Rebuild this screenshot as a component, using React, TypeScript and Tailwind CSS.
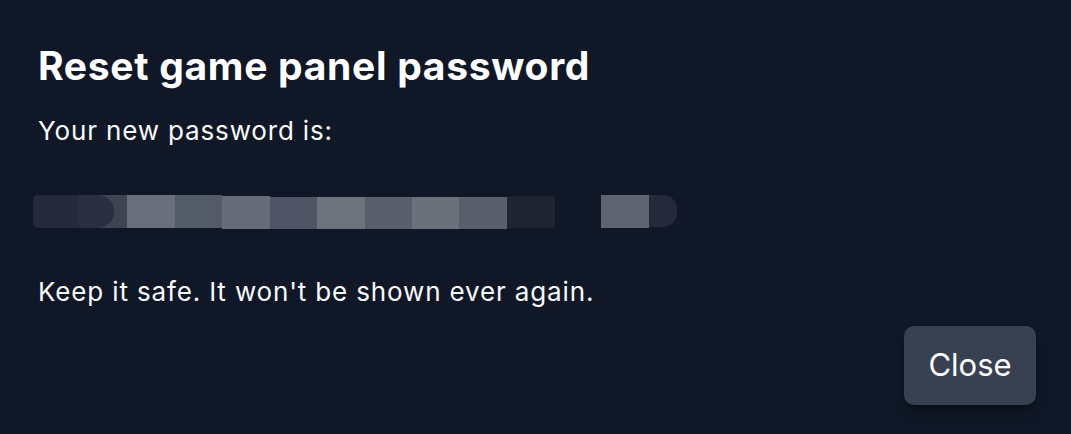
import React from 'react';

// pixelated blur standing in for the hidden password
const blurBlocks = [
  { w: 'w-[46px]', color: 'bg-[#242a3a]', shape: 'rounded-l-[5px] h-[33px] mt-0' },
  { w: 'w-[48px]', color: 'bg-[#3d4453]', shape: 'h-[33px] mt-0', blob: true },
  { w: 'w-[48px]', color: 'bg-[#6b6f7b]', shape: 'h-[33px] mt-0' },
  { w: 'w-[47px]', color: 'bg-[#545b68]', shape: 'h-[33px] mt-0' },
  { w: 'w-[48px]', color: 'bg-[#686c78]', shape: 'h-[33px] mt-[1px]' },
  { w: 'w-[47px]', color: 'bg-[#4f5564]', shape: 'h-[32px] mt-[2px]' },
  { w: 'w-[48px]', color: 'bg-[#6e727c]', shape: 'h-[32px] mt-[2px]' },
  { w: 'w-[47px]', color: 'bg-[#585e6b]', shape: 'h-[32px] mt-[2px]' },
  { w: 'w-[47px]', color: 'bg-[#6b707b]', shape: 'h-[32px] mt-[2px]' },
  { w: 'w-[48px]', color: 'bg-[#585e6b]', shape: 'h-[32px] mt-[2px]' },
  { w: 'w-[48px]', color: 'bg-[#1f2433]', shape: 'h-[32px] mt-[1px]' },
  { w: 'w-[46px]', color: 'bg-transparent', shape: 'h-[32px] mt-0' },
  { w: 'w-[48px]', color: 'bg-[#5f6470]', shape: 'h-[33px] mt-0' },
  { w: 'w-[28px]', color: 'bg-[#242a3a]', shape: 'rounded-r-[14px] h-[32px] mt-0' },
];

const App: React.FC = () => {
  return (
    <div
      className="w-[1071px] h-[434px] bg-[#101828] text-white flex flex-col pt-[46px] pl-[38px] pr-[35px]"
      style={{ fontFamily: 'Inter, "Noto Sans", sans-serif' }}
    >
      <h1 className="text-[39px] leading-[40px] font-bold tracking-[0.7px]">Reset game panel password</h1>
      <p className="mt-[29px] text-[26px] leading-8 tracking-[0.85px] text-gray-50">Your new password is:</p>

      <div className="mt-[48px] -ml-[5px] flex h-[35px]">
        {blurBlocks.map((b, i) => (
          <div key={i} className={`${b.w} ${b.color} ${b.shape} flex`}>
            {b.blob && <div className="w-[35px] h-full rounded-r-[16px] bg-[#2a3040]" />}
          </div>
        ))}
      </div>

      <p className="mt-[46px] text-[26px] leading-8 tracking-[0.85px] text-gray-50">Keep it safe. It won't be shown ever again.</p>

      <div className="mt-[18px] flex justify-end">
        <button className="w-[132px] h-[79px] rounded-[10px] bg-[#374151] text-[31px] text-white shadow-lg shadow-black/30">
          Close
        </button>
      </div>
    </div>
  );
};

export default App;
